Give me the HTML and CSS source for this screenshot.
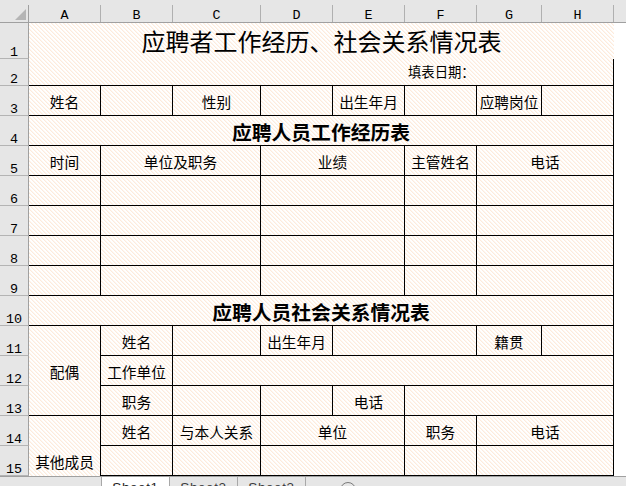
FILE: index.html
```html
<!DOCTYPE html>
<html lang="zh">
<head>
<meta charset="utf-8">
<title>应聘者工作经历、社会关系情况表</title>
<link rel="stylesheet" href="styles.css">
</head>
<body>
<div class="app">
<div class="sheet">
<table class="grid">
<colgroup><col class="c-head"><col class="c-72"><col class="c-72"><col class="c-88"><col class="c-72"><col class="c-72"><col class="c-72"><col class="c-65"><col class="c-72"><col class="c-fill"></colgroup>
<thead>
<tr class="h-head">
<th class="corner"><div class="col-head"><svg class="tri" width="11" height="11" viewBox="0 0 11 11"><path d="M0 11 L11 0 L11 11 Z" fill="#b5b5b5"/></svg></div></th>
<th><div class="col-head">A</div></th><th><div class="col-head">B</div></th><th><div class="col-head">C</div></th><th><div class="col-head">D</div></th><th><div class="col-head">E</div></th><th><div class="col-head">F</div></th><th><div class="col-head">G</div></th><th><div class="col-head">H</div></th><th class="filler"></th>
</tr>
</thead>
<tbody>
<tr class="h-36"><th class="rh">1</th><td colspan="8" class="plain main-title">应聘者工作经历、社会关系情况表</td></tr>
<tr class="h-27"><th class="rh">2</th><td colspan="5" class="plain-b"></td><td colspan="3" class="date-cell">填表日期：</td></tr>
<tr class="h-30"><th class="rh">3</th><td>姓名</td><td></td><td>性别</td><td></td><td>出生年月</td><td></td><td>应聘岗位</td><td></td></tr>
<tr class="h-30"><th class="rh">4</th><td colspan="8" class="sec-title">应聘人员工作经历表</td></tr>
<tr class="h-30"><th class="rh">5</th><td>时间</td><td colspan="2">单位及职务</td><td colspan="2">业绩</td><td>主管姓名</td><td colspan="2">电话</td></tr>
<tr class="h-30"><th class="rh">6</th><td></td><td colspan="2"></td><td colspan="2"></td><td></td><td colspan="2"></td></tr>
<tr class="h-30"><th class="rh">7</th><td></td><td colspan="2"></td><td colspan="2"></td><td></td><td colspan="2"></td></tr>
<tr class="h-30"><th class="rh">8</th><td></td><td colspan="2"></td><td colspan="2"></td><td></td><td colspan="2"></td></tr>
<tr class="h-30"><th class="rh">9</th><td></td><td colspan="2"></td><td colspan="2"></td><td></td><td colspan="2"></td></tr>
<tr class="h-30"><th class="rh">10</th><td colspan="8" class="sec-title">应聘人员社会关系情况表</td></tr>
<tr class="h-30"><th class="rh">11</th><td rowspan="3">配偶</td><td>姓名</td><td></td><td>出生年月</td><td colspan="2"></td><td>籍贯</td><td></td></tr>
<tr class="h-30"><th class="rh">12</th><td>工作单位</td><td colspan="6"></td></tr>
<tr class="h-30"><th class="rh">13</th><td>职务</td><td></td><td></td><td>电话</td><td colspan="3"></td></tr>
<tr class="h-30"><th class="rh">14</th><td rowspan="3">其他成员</td><td>姓名</td><td>与本人关系</td><td colspan="2">单位</td><td>职务</td><td colspan="2">电话</td></tr>
<tr class="h-30"><th class="rh">15</th><td></td><td></td><td colspan="2"></td><td></td><td colspan="2"></td></tr>
<tr class="h-30"><th class="rh">16</th><td></td><td></td><td colspan="2"></td><td></td><td colspan="2"></td></tr>
</tbody>
</table>
</div>
<div class="tabs">
<div class="tab active">Sheet1</div>
<div class="tab">Sheet2</div>
<div class="tab">Sheet3</div>
<svg class="add" width="18" height="18" viewBox="0 0 18 18"><circle cx="9" cy="9" r="7.5" fill="none" stroke="#7a7a7a" stroke-width="1"/><path d="M9 5V13M5 9H13" stroke="#7a7a7a" stroke-width="1"/></svg>
</div>
</div>
</body>
</html>
```
FILE: styles.css
```css
* { box-sizing: border-box; }
html, body { margin: 0; padding: 0; height: 100%; overflow: hidden; background: #fff; }
.app { display: flex; flex-direction: column; width: 626px; height: 486px; overflow: hidden; font-family: "Noto Sans CJK SC", "Liberation Sans", sans-serif; color: #000; }
.sheet { height: 476px; flex: none; overflow: hidden; }
.grid {
  table-layout: fixed; width: 626px; border-collapse: separate; border-spacing: 0;
}
.c-head { width: 29px; } .c-72 { width: 72px; } .c-88 { width: 88px; } .c-65 { width: 65px; } .c-fill { width: 12px; }
.h-head { height: 23px; } .h-36 { height: 36px; } .h-27 { height: 27px; } .h-30 { height: 30px; }
thead th { padding: 0; background: #e6e6e6; border-bottom: 1px solid #a0a0a0; font: normal 13.4px/17px "Liberation Mono", monospace; vertical-align: bottom; text-align: center; }
.col-head { height: 17px; margin-top: 5px; padding-top: 2px; border-right: 1px solid #b0b0b0; position: relative; }
.corner { background: #e6e6e6; }
.corner .col-head { border-right-color: #a0a0a0; }
.tri { position: absolute; left: 15px; top: 4px; }
.rh { padding: 0; background: #e6e6e6; border-right: 1px solid #a0a0a0; border-bottom: 1px solid #b4b4b4; font: normal 13.4px/11px "Liberation Mono", monospace; vertical-align: bottom; text-align: center; }
td {
  padding: 2px 0 0; border-right: 1px solid #000; border-bottom: 1px solid #000; text-align: center; vertical-align: middle;
  font-size: 14.67px; line-height: 18px; white-space: nowrap; overflow: hidden;
  background-color: #fff;
  background-image: url("data:image/svg+xml,%3Csvg xmlns='http://www.w3.org/2000/svg' width='4' height='4' shape-rendering='crispEdges'%3E%3Cpath fill='%23fdebdc' d='M0 0h1v1H0zM1 1h1v1H1zM2 2h1v1H2zM3 3h1v1H3z'/%3E%3Cpath fill='%23fef6ef' d='M1 0h1v1H1zM2 1h1v1H2zM3 2h1v1H3zM0 3h1v1H0z'/%3E%3C/svg%3E");
  background-size: 4px 4px;
  background-attachment: fixed;
}
td.plain { border: 0; }
td.plain-b { border-right: 0; }
.main-title { font-size: 24px; line-height: 30px; padding: 0; }
.date-cell { font-size: 13.33px; text-align: left; padding: 0 0 0 3px; }
.sec-title { font-size: 19.8px; font-weight: 700; line-height: 24px; padding: 2px 0 0; }
.tabs { flex: none; height: 10px; display: flex; align-items: flex-start; padding-left: 101px; background: #e6e6e6; border-top: 1px solid #a0a0a0; overflow: hidden; position: relative; }
.tab { width: 68px; height: 20px; margin-top: -1px; padding-top: 2px; text-align: center; font: 13.5px/20px "Liberation Sans", sans-serif; letter-spacing: .6px; color: #3c3c3c; border-right: 1px solid #a8a8a8; flex: none; }
.tab.active { background: #fff; color: #1f1f1f; border-left: 1px solid #a8a8a8; width: 69px; }
.add { flex: none; margin: 4px 0 0 33px; }
```
